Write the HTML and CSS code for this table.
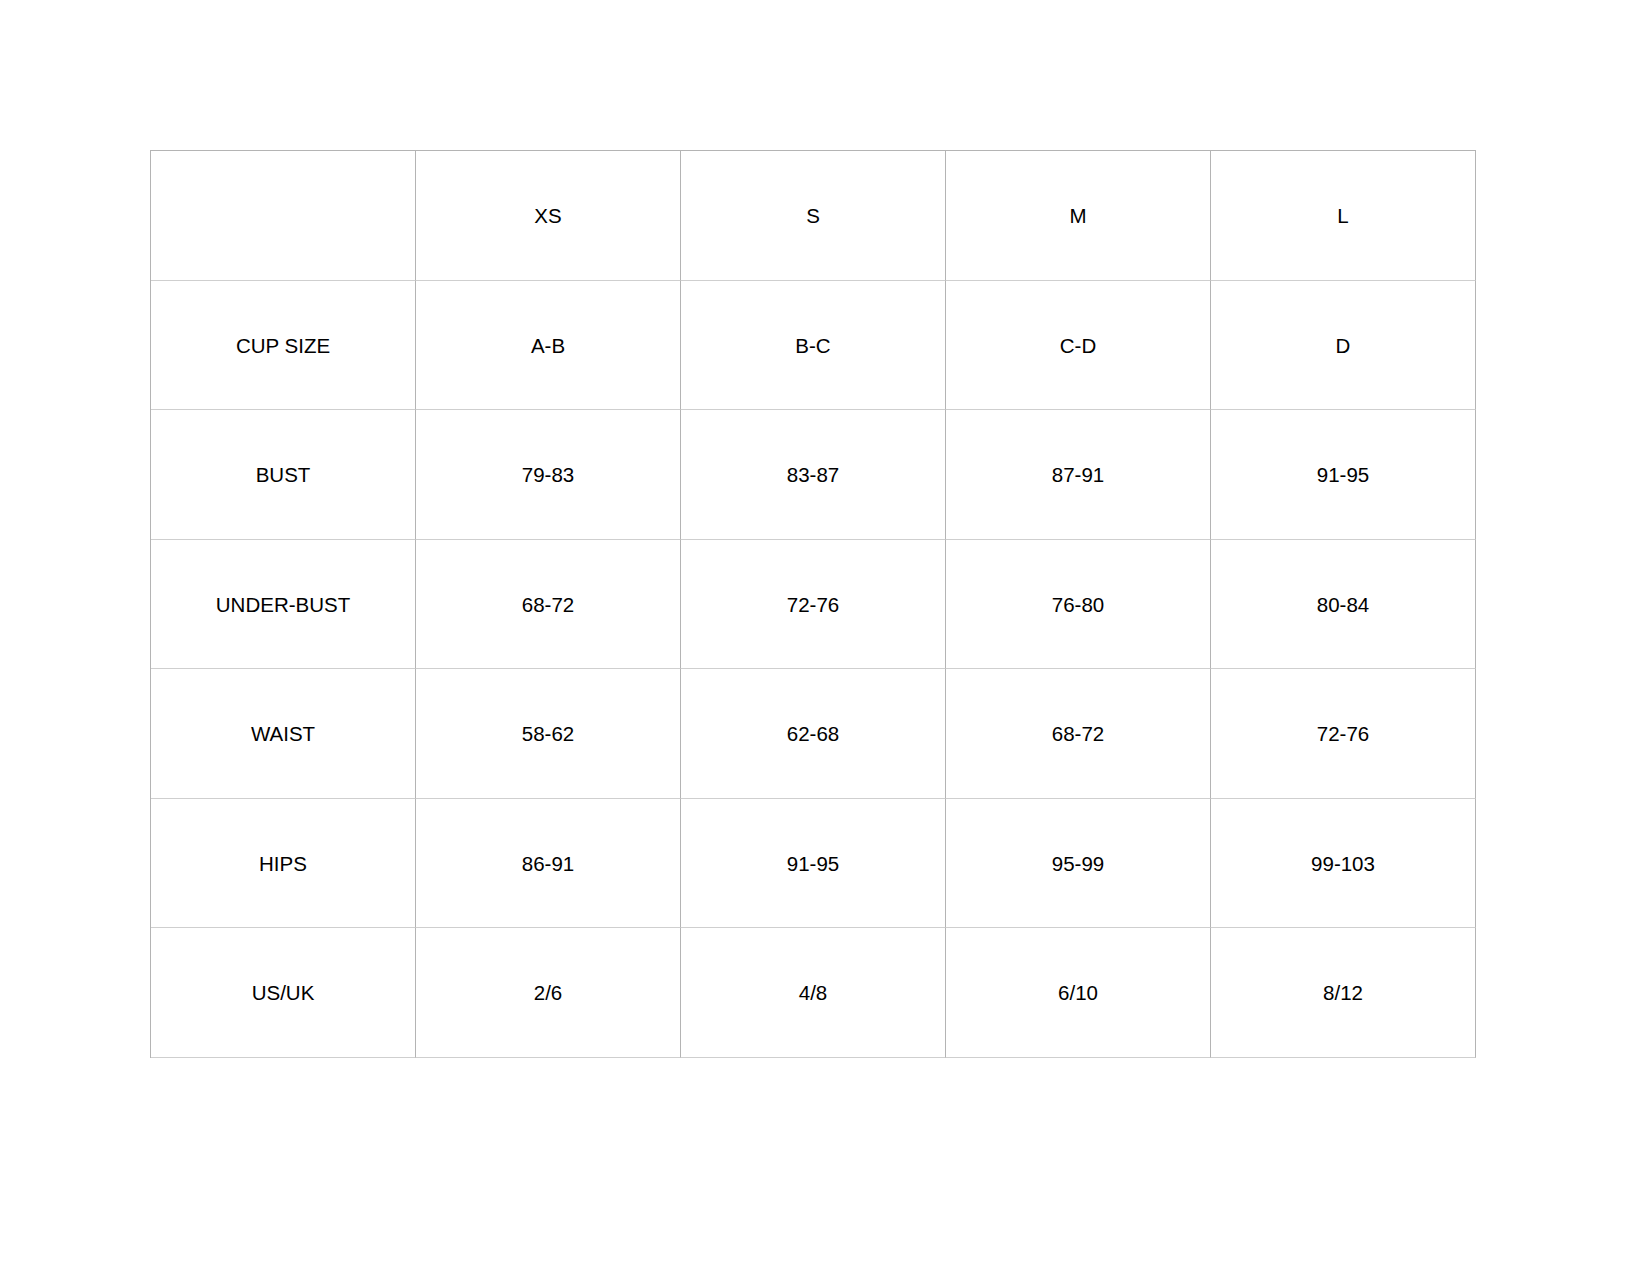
FILE: index.html
```html
<!DOCTYPE html>
<html>
<head>
<meta charset="utf-8">
<link rel="stylesheet" href="styles.css">
</head>
<body>
<div class="chart">
  <div class="cell"></div><div class="cell">XS</div><div class="cell">S</div><div class="cell">M</div><div class="cell">L</div>
  <div class="cell">CUP SIZE</div><div class="cell">A-B</div><div class="cell">B-C</div><div class="cell">C-D</div><div class="cell">D</div>
  <div class="cell">BUST</div><div class="cell">79-83</div><div class="cell">83-87</div><div class="cell">87-91</div><div class="cell">91-95</div>
  <div class="cell">UNDER-BUST</div><div class="cell">68-72</div><div class="cell">72-76</div><div class="cell">76-80</div><div class="cell">80-84</div>
  <div class="cell">WAIST</div><div class="cell">58-62</div><div class="cell">62-68</div><div class="cell">68-72</div><div class="cell">72-76</div>
  <div class="cell">HIPS</div><div class="cell">86-91</div><div class="cell">91-95</div><div class="cell">95-99</div><div class="cell">99-103</div>
  <div class="cell">US/UK</div><div class="cell">2/6</div><div class="cell">4/8</div><div class="cell">6/10</div><div class="cell">8/12</div>
</div>
</body>
</html>
```

FILE: styles.css
```css
html, body {
  margin: 0;
  padding: 0;
  background: #ffffff;
}
body {
  width: 1650px;
  height: 1275px;
  font-family: "Liberation Sans", Arial, sans-serif;
  color: #000;
}
.chart {
  margin-left: 150px;
  margin-top: 150px;
  display: grid;
  grid-template-columns: repeat(5, 265px);
  grid-template-rows: repeat(7, 129.5px);
  border-top: 1px solid #b4b4b4;
  border-left: 1px solid #b4b4b4;
  width: max-content;
}
.cell {
  border-right: 1px solid #b4b4b4;
  border-bottom: 1px solid #cfcfcf;
  display: flex;
  align-items: center;
  justify-content: center;
  padding-top: 2px;
  font-size: 20.5px;
  box-sizing: border-box;
}
```
